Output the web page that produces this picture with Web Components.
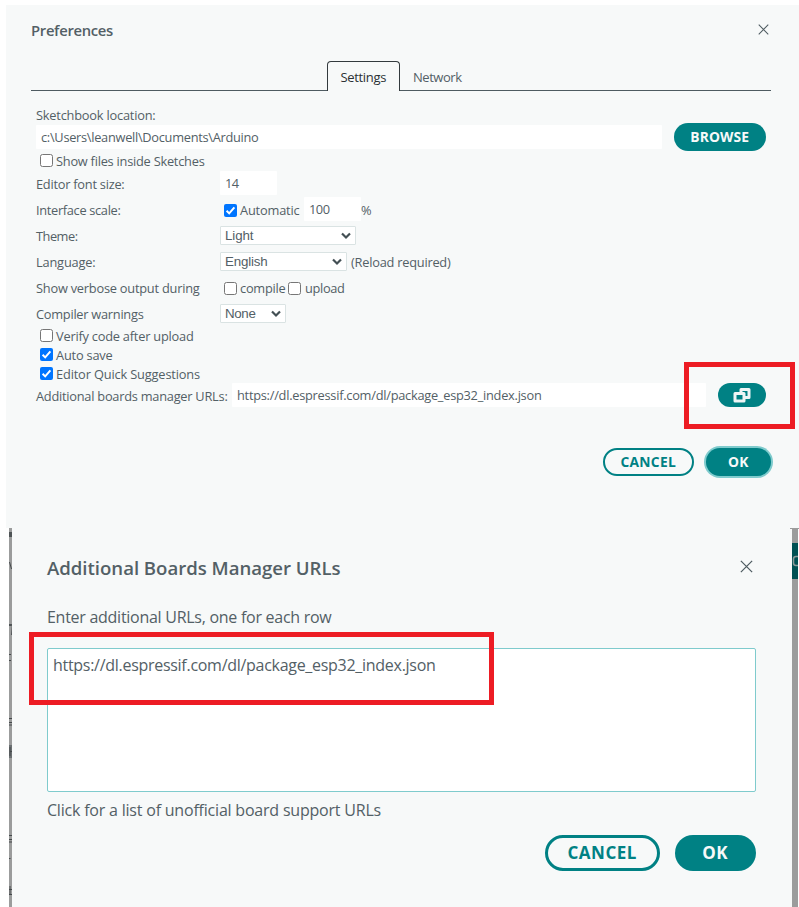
<!DOCTYPE html>
<html lang="en">
<head>
<meta charset="utf-8">
<title>Preferences</title>
<style>
body { margin: 0; width: 799px; height: 907px; overflow: hidden; background: #fff; color: #536066; font: 13px "Open Sans", "Noto Sans", sans-serif; }
</style>
</head>
<body>
<prefs-page></prefs-page>
<script>
const define = (name, html, after) => {
  const t = document.createElement('template');
  t.innerHTML = html;
  customElements.define(name, class extends HTMLElement {
    connectedCallback() {
      if (this.shadowRoot) return;
      this.attachShadow({ mode: 'open' }).appendChild(t.content.cloneNode(true));
      if (after) after(this, this.shadowRoot);
    }
  });
};

// A single line of text, tracked so that it fills the width "w"
define('ui-text', `<style>:host{display:inline-block;white-space:pre;line-height:18px;flex:none}span{display:inline-block}</style><span></span>`, (el, root) => {
  const s = root.querySelector('span');
  const label = el.getAttribute('label');
  s.textContent = label;
  const size = el.getAttribute('size');
  if (size) s.style.fontSize = size + 'px';
  const w = +el.getAttribute('w');
  el.style.width = w + 'px';
  const natural = s.getBoundingClientRect().width;
  s.style.letterSpacing = ((w - .5 - natural) / label.length) + 'px';
});

define('ui-check', `<style>:host{display:block;width:13px;height:13px;flex:none}svg{display:block}.tick,.on{display:none}:host([checked]) .on,:host([checked]) .tick{display:block}:host([checked]) .off{display:none}</style>
<svg width="13" height="13"><rect class="off" x=".5" y=".5" width="12" height="12" rx="2" fill="#fff" stroke="#767676"/><rect class="on" width="13" height="13" rx="2" fill="#0075ff"/><path class="tick" d="M2.6 6.8 5.2 9.4 10.4 3.4" fill="none" stroke="#fff" stroke-width="2"/></svg>`);

define('ui-field', `<style>:host{display:flex;align-items:center;align-self:flex-start;box-sizing:border-box;height:24px;padding:0 0 0 5px;background:#fff;border-radius:1px;flex:none}</style><slot></slot>`);

define('ui-select', `<style>:host{display:flex;align-items:center;justify-content:space-between;box-sizing:border-box;height:19px;margin-bottom:1px;padding:0 4px;border:1px solid #dae3e3;border-radius:1px;background:#fff;flex:none;font:13.33px "Liberation Sans",sans-serif}::slotted(*){margin-top:1px}svg{display:block}</style><slot></slot><svg width="10" height="8"><path d="M1 1.5 5 5.5 9 1.5" fill="none" stroke="#434f54" stroke-width="2.2"/></svg>`);

define('ui-row', `<style>:host{display:flex;align-items:center;flex:none;height:26px}</style><slot></slot>`);

define('ui-button', `<style>:host{display:flex;align-items:center;justify-content:center;box-sizing:border-box;flex:none;border-radius:40px;background:#008184;color:#f7f9f9;font-weight:700}:host([outline]){background:none;color:#008184;border:2px solid #008184}:host([focused]){box-shadow:0 0 0 2px #7fcbcd}</style><slot></slot>`);

define('ui-close', `<style>:host{display:block;flex:none}svg{display:block;width:100%;height:100%}</style><svg viewBox="0 0 12 12"><path d="M.8.8 11.2 11.2M11.2.8.8 11.2" fill="none" stroke="#4e5b61" stroke-width="1.15"/></svg>`);

// Red annotation frame laid over the dialogs
define('mark-frame', `<style>:host{position:absolute;box-sizing:border-box;border:5px solid #ed1c24;z-index:3}</style>`);

define('tab-bar', `<style>
:host{display:flex;margin:0 28px 0 25px;height:30px;flex:none}
.rule{border-bottom:1px solid #4e5b61;box-sizing:border-box}
.left{width:296px}.rest{flex:1;padding:7px 0 0 13px}
.tab{width:73px;box-sizing:border-box;border:1px solid #333a3e;border-bottom:0;border-radius:4px 4px 0 0;padding:6px 0 0 12.5px;color:#2b3134}
</style><div class="rule left"></div><div class="tab"><ui-text label="Settings" w="46" size="13"></ui-text></div><div class="rule rest"><ui-text label="Network" w="49" size="13"></ui-text></div>`);

define('prefs-dialog', `<style>
:host{display:flex;flex-direction:column;box-sizing:border-box;margin:5px 0 0 6px;width:793px;height:523px;background:#f7f9f9;font-size:12.8px;flex:none}
header{display:flex;height:56px;box-sizing:border-box;padding:16px 30px 0 25px;justify-content:space-between;font-weight:600;flex:none}
header ui-close{width:11px;height:11px;margin-top:3px}
.form{padding:15px 33px 0 30px;display:flex;flex-direction:column;flex:none}
.lab{width:184px;flex:none}
.chk{padding-left:4px;gap:3px}
.low{margin-top:2px}
.lab ui-text{display:block}
footer{display:flex;justify-content:flex-end;padding:41px 28px 0 0;gap:12px}
</style>
<header><ui-text label="Preferences" w="82.5" size="14.8"></ui-text><ui-close></ui-close></header>
<tab-bar></tab-bar>
<div class="form">
<ui-row style="height:19px"><ui-text style="margin-bottom:2px" label="Sketchbook location:" w="120"></ui-text></ui-row>
<ui-row style="height:24px;justify-content:space-between"><ui-field style="width:626px"><ui-text label="c:\\Users\\leanwell\\Documents\\Arduino" w="218"></ui-text></ui-field><ui-button style="width:92px;height:28px"><ui-text label="BROWSE" w="59.5" size="13.8"></ui-text></ui-button></ui-row>
<ui-row class="chk" style="height:22px"><ui-check></ui-check><ui-text class="low" label="Show files inside Sketches" w="149"></ui-text></ui-row>
<ui-row><div class="lab"><ui-text label="Editor font size:" w="89"></ui-text></div><ui-field style="width:57px"><ui-text label="14" w="14"></ui-text></ui-field></ui-row>
<ui-row><div class="lab"><ui-text label="Interface scale:" w="85"></ui-text></div><ui-check checked style="margin:0 3px 0 4px"></ui-check><ui-text label="Automatic" w="60"></ui-text><ui-field style="width:57px;margin-left:4px"><ui-text label="100" w="21"></ui-text></ui-field><ui-text label="%" w="11"></ui-text></ui-row>
<ui-row><div class="lab"><ui-text label="Theme:" w="42"></ui-text></div><ui-select style="width:136px"><ui-text label="Light" w="29"></ui-text></ui-select></ui-row>
<ui-row><div class="lab"><ui-text label="Language:" w="60"></ui-text></div><ui-select style="width:127px;margin-right:4px"><ui-text label="English" w="43"></ui-text></ui-select><ui-text label="(Reload required)" w="100"></ui-text></ui-row>
<ui-row><div class="lab"><ui-text label="Show verbose output during" w="164"></ui-text></div><ui-check style="margin:0 3px 0 4px"></ui-check><ui-text label="compile" w="46"></ui-text><ui-check style="margin:0 4px 0 2px"></ui-check><ui-text label="upload" w="40"></ui-text></ui-row>
<ui-row style="margin-bottom:-1px"><div class="lab"><ui-text label="Compiler warnings" w="108"></ui-text></div><ui-select style="width:66px"><ui-text label="None" w="31"></ui-text></ui-select></ui-row>
<ui-row class="chk" style="height:19px"><ui-check></ui-check><ui-text label="Verify code after upload" w="138"></ui-text></ui-row>
<ui-row class="chk" style="height:19px"><ui-check checked></ui-check><ui-text label="Auto save" w="57"></ui-text></ui-row>
<ui-row class="chk" style="height:19px"><ui-check checked></ui-check><ui-text label="Editor Quick Suggestions" w="144.5"></ui-text></ui-row>
<ui-row style="height:24px;justify-content:space-between"><ui-text class="low" label="Additional boards manager URLs:" w="192"></ui-text><ui-field style="width:474px;margin-right:8px"><ui-text label="https://dl.espressif.com/dl/package_esp32_index.json" w="305"></ui-text></ui-field><ui-button style="width:48px;height:24px"><svg width="18" height="17" viewBox="0 0 18 17" fill="none" stroke="#eef5f5" stroke-width="3" stroke-linejoin="round"><path d="M8 5V2.500h8v8h-4"/><path d="M2 6.500h9v7.500H2z" /></svg></ui-button></ui-row>
</div>
<footer><ui-button outline style="width:91px;height:28px"><ui-text label="CANCEL" w="56" size="13.8"></ui-text></ui-button><ui-button focused style="width:65px;height:28px"><ui-text label="OK" w="21" size="13.8"></ui-text></ui-button></footer>`);

// Slivers of the dimmed editor window on both sides of the second dialog
define('dim-edge', `<style>:host{display:block;flex:none;background:#9b9c9c;height:379px}svg{display:none;overflow:visible}:host([left]) .l,:host([right]) .r{display:block}</style>
<svg class="l" width="3" height="379"><path d="M0 0h4v1H0z" fill="#9b9c9c"/><path d="M0 4h3v5H0zM2 107h1v-9H0v-2h3z" fill="#4e5355"/><path d="M.5 34 2.5 41M0 126.5h2M0 132.500h2M0 190.500h3M0 194.500h3M0 197h3M0 307.500h3M0 311.500h3M0 314h3M0 330.500h1.500M1 358v9M0 361.500h3M0 366.500h3" stroke="#44494b" fill="none"/><path d="M0 217h3v13H0z" fill="#6b7072"/><path d="M1 219v9M1 223.500h2" stroke="#44494b"/></svg>
<svg class="r" width="6" height="379"><path d="M-2 0h9v1h-9z" fill="#9b9c9c"/><path d="M0 15h6v36H0z" fill="#005154"/><path d="M6 28.500H4Q1.500 28.500 1.500 31v4q0 2.500 2.500 2.500h2" fill="none" stroke="#8b9999" stroke-width="1.500"/></svg>`);

define('urls-dialog', `<style>
:host{display:flex;flex-direction:column;box-sizing:border-box;width:780px;height:379px;background:#f7f9f9;padding:0 36px 0 35px;flex:none}
header{display:flex;justify-content:space-between;padding:31px 3px 0 0;font-weight:600;height:80px;box-sizing:border-box;flex:none}
header ui-close{width:13px;height:13px;margin-top:1px}
.intro{height:40px;flex:none}
.area{height:144px;box-sizing:border-box;border:1px solid #7fcbcd;border-radius:2px;background:#fff;padding:7px 5px;flex:none}
.note{height:43px;box-sizing:border-box;padding-top:9px;flex:none}
.acts{display:flex;justify-content:flex-end;gap:15px}
.acts ui-button[outline]{border-width:3px}
</style>
<header><ui-text label="Additional Boards Manager URLs" w="294" size="18.6"></ui-text><ui-close></ui-close></header>
<div class="intro"><ui-text label="Enter additional URLs, one for each row" w="285" size="16"></ui-text></div>
<div class="area"><ui-text label="https://dl.espressif.com/dl/package_esp32_index.json" w="383" size="16"></ui-text></div>
<div class="note"><ui-text label="Click for a list of unofficial board support URLs" w="334.500" size="16"></ui-text></div>
<div class="acts"><ui-button outline style="width:115px;height:36px"><ui-text label="CANCEL" w="70" size="17"></ui-text></ui-button><ui-button style="width:81px;height:36px"><ui-text label="OK" w="26.500" size="17"></ui-text></ui-button></div>`);

define('prefs-page', `<style>:host{display:flex;flex-direction:column;position:relative;width:799px;height:907px;overflow:hidden}.second{display:flex;padding-left:9px}</style>
<prefs-dialog></prefs-dialog>
<div class="second"><dim-edge left style="width:3px"></dim-edge><urls-dialog></urls-dialog><dim-edge right style="width:6px"></dim-edge></div>
<mark-frame style="left:684px;top:362px;width:111px;height:67px"></mark-frame>
<mark-frame style="left:29px;top:632px;width:465px;height:73px"></mark-frame>`);
</script>
</body>
</html>
